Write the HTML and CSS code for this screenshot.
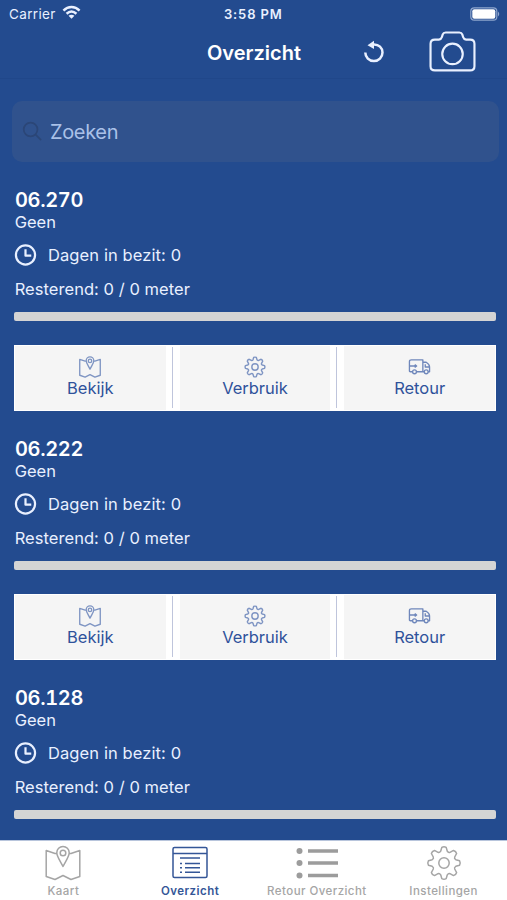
FILE: index.html
```html
<!DOCTYPE html>
<html lang="nl">
<head>
<meta charset="utf-8">
<title>Overzicht</title>
<link rel="stylesheet" href="styles.css">
</head>
<body>
<svg class="defs" aria-hidden="true">
  <symbol id="map" viewBox="0 0 36 36"><path d="M12.500 8 10 8.500 1.200 5.500V31.500L10 34.500 18 30.500 26 34.500 34.800 31.500V5.500L26 8.500 23.500 8M18 21.500C15 15.500 11.800 11.500 11.800 7.700A6.200 6.200 0 0 1 24.200 7.700C24.200 11.500 21 15.500 18 21.500Z"/><circle cx="18" cy="8" r="2.800"/></symbol>
  <symbol id="gear" viewBox="-18 -18 36 36"><path d="M-3.300-11.800-2.200-15.600Q0-16.800 2.200-15.600L3.300-11.800Q4.800-10 6-10.700L9.500-12.600Q12-12 12.600-9.500L10.700-6Q10-4.500 11.800-3.300L15.600-2.200Q16.800 0 15.600 2.200L11.800 3.300Q10 4.500 10.700 6L12.600 9.500Q12 12 9.500 12.600L6 10.700Q4.500 10 3.300 11.800L2.200 15.600Q0 16.800-2.200 15.600L-3.300 11.800Q-4.500 10-6 10.700L-9.500 12.600Q-12 12-12.600 9.500L-10.700 6Q-10 4.500-11.800 3.300L-15.600 2.200Q-16.800 0-15.600-2.200L-11.800-3.300Q-10-4.500-10.700-6L-12.600-9.500Q-12-12-9.500-12.600L-6-10.700Q-4.500-10-3.300-11.800Z"/><circle r="5.200"/></symbol>
  <symbol id="truck" viewBox="0 0 24 18"><path d="M4.500 14H2.500Q1.500 14 1.500 13V3.500Q1.500 1.500 3.500 1.500H15.500V14H9M15.500 4H19Q22.500 6 22.500 9V14H21M17 14H15.500M18 6V9H22M2 8H9M7 6.500 9 8 7 9.500"/><circle cx="6.800" cy="14" r="2"/><circle cx="19" cy="14" r="2"/></symbol>
  <symbol id="clock" viewBox="0 0 24 24"><circle cx="12" cy="12" r="10"/><path d="M12 6V12.700H18"/></symbol>
</svg>
<div class="screen">
  <header class="status">
    <div class="carrier"><span>Carrier</span>
      <svg class="wifi" viewBox="0 0 20 15"><path d="M1.500 5.500C6.500 .6 13.500 .6 18.500 5.500M4.800 8.800C8 5.900 12 5.900 15.200 8.800"/><path class="dot" d="M6.900 11Q10 8.500 13.100 11L10 14.200Z"/></svg>
    </div>
    <span class="time">3:58 PM</span>
    <svg class="battery" viewBox="0 0 30 14"><rect class="shell" x=".8" y=".8" width="26" height="12.400" rx="3.500"/><rect class="charge" x="2.300" y="2.300" width="23" height="9.400" rx="2"/><path class="tip" d="M28 4.500Q30.500 7 28 9.500Z"/></svg>
  </header>
  <nav class="navbar">
    <h1>Overzicht</h1>
    <svg class="refresh" viewBox="0 0 22 24"><path d="M10 4.500C16 4 19.500 8 19.500 12.500A8.600 8.600 0 0 1 2.300 12.500"/><path class="arrow" d="M4.500 5.200 11 .8V9Z"/></svg>
    <svg class="camera" viewBox="0 0 48 42"><path d="M6 8.800H10Q12.500 8.500 13 6.500L14 3.500Q14.700 1.500 17 1.500H31Q33.300 1.500 34 3.500L35 6.500Q35.500 8.500 38 8.800H42Q46.500 8.800 46.500 13V36Q46.500 40.300 42 40.300H6Q1.500 40.300 1.500 36V13Q1.500 8.800 6 8.800Z"/><circle cx="24" cy="23.500" r="10.500"/></svg>
  </nav>
  <main class="content">
    <label class="search">
      <svg viewBox="0 0 22 22"><circle cx="9" cy="9" r="7.200"/><path d="M14.300 14.300 20 20"/></svg>
      <span>Zoeken</span>
    </label>
    <article class="item">
      <h2>06.270</h2>
      <p class="owner">Geen</p>
      <p class="days"><svg><use href="#clock"/></svg><span>Dagen in bezit: 0</span></p>
      <p class="rest">Resterend: 0 / 0 meter</p>
      <div class="bar"></div>
      <div class="actions">
        <div class="action"><svg class="i-map"><use href="#map"/></svg><span>Bekijk</span></div><i></i>
        <div class="action"><svg class="i-gear"><use href="#gear"/></svg><span>Verbruik</span></div><i></i>
        <div class="action"><svg class="i-truck"><use href="#truck"/></svg><span>Retour</span></div>
      </div>
    </article>
    <article class="item">
      <h2>06.222</h2>
      <p class="owner">Geen</p>
      <p class="days"><svg><use href="#clock"/></svg><span>Dagen in bezit: 0</span></p>
      <p class="rest">Resterend: 0 / 0 meter</p>
      <div class="bar"></div>
      <div class="actions">
        <div class="action"><svg class="i-map"><use href="#map"/></svg><span>Bekijk</span></div><i></i>
        <div class="action"><svg class="i-gear"><use href="#gear"/></svg><span>Verbruik</span></div><i></i>
        <div class="action"><svg class="i-truck"><use href="#truck"/></svg><span>Retour</span></div>
      </div>
    </article>
    <article class="item">
      <h2>06.128</h2>
      <p class="owner">Geen</p>
      <p class="days"><svg><use href="#clock"/></svg><span>Dagen in bezit: 0</span></p>
      <p class="rest">Resterend: 0 / 0 meter</p>
      <div class="bar"></div>
    </article>
  </main>
  <footer class="tabs">
    <div class="tab"><svg><use href="#map"/></svg><span>Kaart</span></div>
    <div class="tab active"><svg viewBox="0 0 36 36"><rect x="1" y="2.500" width="34" height="30" rx="1.500"/><path d="M1 8.500H35M8 13H28M13 18.500H28M13 22.800H28M13 27.200H28M8 18.500H10M8 22.800H10M8 27.200H10"/></svg><span>Overzicht</span></div>
    <div class="tab"><svg class="list" viewBox="0 0 44 36"><path d="M13 6H43M13 18H43M13 30.500H43"/><circle cx="4.500" cy="6" r="3"/><circle cx="4.500" cy="18" r="3"/><circle cx="4.500" cy="30.500" r="3"/></svg><span>Retour Overzicht</span></div>
    <div class="tab"><svg><use href="#gear"/></svg><span>Instellingen</span></div>
  </footer>
</div>
</body>
</html>
```
FILE: styles.css
```css
* { box-sizing: border-box; margin: 0; padding: 0; }
body { font-family: Inter, "Liberation Sans", sans-serif; background: #234b8f; color: #e9f0ff; overflow: hidden; }
svg { display: block; flex: none; fill: none; stroke: currentColor; stroke-linejoin: round; }
.defs { display: none; }
.screen { height: 900px; display: flex; flex-direction: column; }

.status { height: 27px; flex: none; display: grid; grid-template-columns: 215px 1fr 30px; align-items: center; padding: 0 7px 0 9px; font-size: 13.5px; }
.carrier { display: flex; align-items: center; gap: 6px; letter-spacing: .35px; }
.wifi { width: 19px; height: 15px; margin-top: -2px; stroke-width: 2.6; }
.wifi .dot, .arrow { fill: currentColor; stroke: none; }
.time { font-weight: 600; letter-spacing: .85px; font-size: 13px; }
.battery { width: 30px; height: 14px; stroke: none; }
.battery .shell { stroke: #8fa6cd; stroke-width: 1.2; }
.battery .charge { fill: #fff; }
.battery .tip { fill: #8fa6cd; }

.navbar { height: 52px; flex: none; display: grid; grid-template-columns: 207px 156px 66px 1fr; align-items: center; border-bottom: 1px solid #20478a; }
h1 { grid-column: 2; font-size: 20px; font-weight: 600; color: #fff; white-space: nowrap; }
.refresh { width: 22px; height: 24px; margin-top: -2px; stroke-width: 2.5; }
.camera { width: 47px; height: 41px; margin-top: -2px; stroke-width: 2.2; }

.content { flex: 1; min-height: 0; overflow: hidden; padding: 22px 11px 0 14px; }
.search { height: 61px; margin: 0 -3px 24.500px -2px; padding: 0 10px; border-radius: 10px; background: #30528d; display: flex; align-items: center; gap: 7px; font-size: 20px; letter-spacing: -.35px; color: #aac1e8; }
.search svg { width: 21px; height: 21px; margin-top: -1px; color: #2b4677; stroke-width: 1.8; }
.item { height: 249.3px; }
h2 { font-size: 20px; line-height: 26px; font-weight: 600; padding-left: 1px; color: #fff; font-variant-numeric: tabular-nums; letter-spacing: -.35px; }
.owner { font-size: 16.5px; line-height: 19px; padding-left: .7px; }
.days { height: 24px; margin-top: 11px; display: flex; align-items: center; gap: 11px; font-size: 16.5px; letter-spacing: .1px; }
.days svg { width: 23px; height: 24px; stroke-width: 2.3; }
.rest { margin-top: 12px; padding-left: .7px; font-size: 16.5px; line-height: 20px; letter-spacing: .05px; }
.bar { height: 9px; margin-top: 13px; border-radius: 2px; background: #d4d4d4; }
.actions { height: 66px; margin-top: 24px; background: #fff; display: flex; align-items: center; border: 1px solid #fff; color: #2f529b; }
.actions i { width: 1px; height: 61px; margin: 0 7px 0 6px; background: #bfc5dc; }
.action { flex: 1; height: 64px; background: #f5f5f5; display: flex; flex-direction: column; align-items: center; font-size: 16.5px; line-height: 20px; }
.action svg { height: 22px; margin: 10px 0 0; color: #7f95c3; }
.i-map { width: 24px; stroke-width: 2.2; }
.i-gear { width: 22px; stroke-width: 2.3; }
.action .i-truck { width: 23px; stroke-width: 1.4; color: #6f87bb; }

.tabs { height: 60px; flex: none; background: #fff; border-top: 1px solid #b8c5dc; display: grid; grid-template-columns: repeat(4, 1fr); color: #a5a5a5; }
.tab { display: flex; flex-direction: column; align-items: center; padding-top: 4px; font-size: 11.5px; line-height: 16px; font-weight: 500; letter-spacing: .45px; white-space: nowrap; }
.tab svg { width: 36px; height: 36px; stroke-width: 1.5; margin-bottom: 2px; }
.tab .list { width: 44px; stroke-width: 3.6; color: #9c9c9c; }
.list circle { fill: currentColor; stroke: none; }
.tab.active { color: #345697; font-weight: 600; }
```
